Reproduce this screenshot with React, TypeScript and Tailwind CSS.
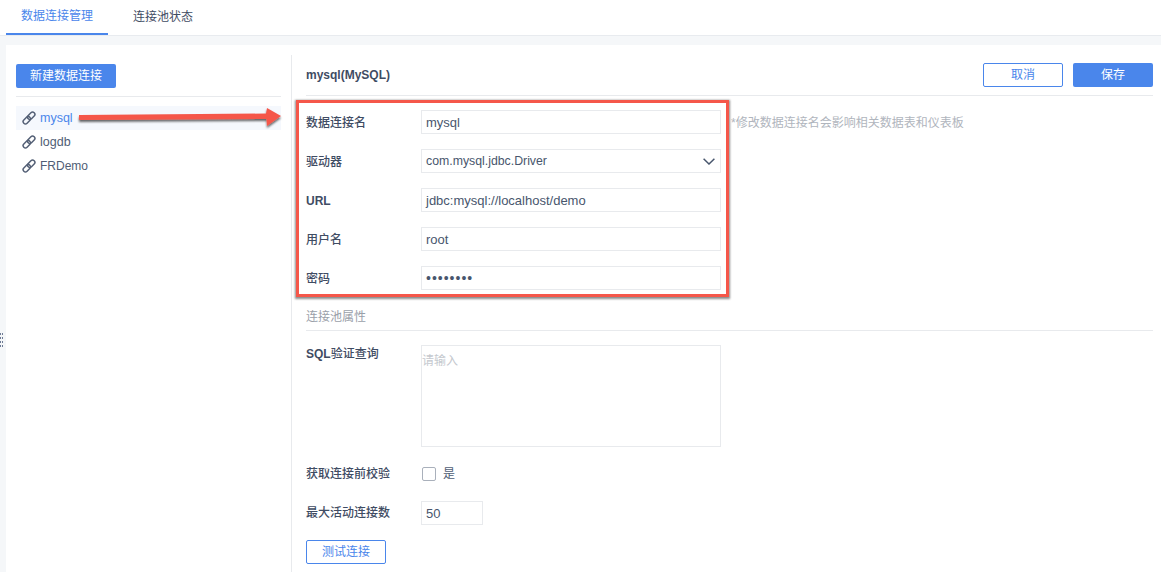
const font = "font-['Liberation_Sans','Noto_Sans_CJK_SC',sans-serif]";

function LinkIcon() {
  return (
    <svg width="14" height="14" viewBox="0 0 14 14" fill="none" stroke="#535f75" strokeWidth="1.5">
      <rect x="6.9" y="0.6" width="4.6" height="8.4" rx="2.3" transform="rotate(45 9.2 4.8)" />
      <rect x="2.5" y="5" width="4.6" height="8.4" rx="2.3" transform="rotate(45 4.8 9.2)" />
    </svg>
  );
}

function Conn({ name, active, size }: { name: string; active?: boolean; size: string }) {
  return (
    <div className={`flex h-6 items-center pl-[6px] ${active ? "bg-[#f5f8fd] text-[#4a86eb]" : "text-[#4f5d75]"}`}>
      <LinkIcon />
      <span className={`ml-[4px] ${size}`}>{name}</span>
    </div>
  );
}

function Row({ label, children, bold }: { label: string; children: React.ReactNode; bold?: boolean }) {
  return (
    <div className="flex h-6 items-center">
      <div className={`w-[115px] pt-[1px] text-[12px] text-[#3f4c63] ${bold ? "font-bold" : "font-medium"}`}>{label}</div>
      {children}
    </div>
  );
}

function Field({ value, className = "w-[300px] text-[13px]" }: { value: string; className?: string }) {
  return (
    <div className={`flex h-6 items-center border border-[#e8eaed] pt-[1px] pl-[4px] text-[#48566d] ${className}`}>
      {value}
    </div>
  );
}

export default function App() {
  return (
    <div className={`relative flex h-[572px] w-[1161px] flex-col overflow-hidden bg-[#f5f7f9] ${font}`}>
      <div className="flex h-9 border-b border-[#e8ebef] bg-white pl-[6px]">
        <div className="flex h-[35px] w-[102px] items-center justify-center border-b-2 border-[#4a86eb] pb-[2px] text-[12px] text-[#4a86eb]">
          数据连接管理
        </div>
        <div className="flex h-[35px] w-[110px] items-center justify-center pb-[2px] text-[12px] text-[#3f4c63]">
          连接池状态
        </div>
      </div>

      <div className="mt-[9px] ml-[6px] flex flex-1 bg-white">
        <div className="mt-[10px] w-[286px] border-r border-[#e8eaed] pr-[10px] pl-[10px]">
          <div className="border-b border-[#e8eaed] pt-2 pb-2">
            <button className="h-6 w-[100px] rounded-[2px] bg-[#4a86eb] text-[12px] text-white">新建数据连接</button>
          </div>
          <div className="mt-[9px]">
            <Conn name="mysql" active size="text-[12.5px]" />
            <Conn name="logdb" size="text-[12.5px]" />
            <Conn name="FRDemo" size="text-[12px]" />
          </div>
        </div>

        <div className="flex-1 pr-2 pl-[14px]">
          <div className="flex h-[51px] items-center justify-between border-b border-[#e8eaed] pt-[11px] pb-[1px]">
            <div className="text-[12px] font-bold text-[#3f4c63]">mysql(MySQL)</div>
            <div className="flex gap-[10px]">
              <button className="h-6 w-20 rounded-[2px] border border-[#4a86eb] text-[12px] text-[#4a86eb]">取消</button>
              <button className="h-6 w-20 rounded-[2px] bg-[#4a86eb] text-[12px] text-white">保存</button>
            </div>
          </div>

          <div className="mt-[14px] flex flex-col gap-[15px]">
            <Row label="数据连接名">
              <Field value="mysql" />
              <span className="ml-[10px] pt-[1px] text-[12px] text-[#b0b5bd]">*修改数据连接名会影响相关数据表和仪表板</span>
            </Row>
            <Row label="驱动器">
              <div className="flex h-6 w-[300px] items-center justify-between border border-[#e8eaed] pt-[1px] pr-[5px] pl-[4px] text-[12.3px] text-[#48566d]">
                com.mysql.jdbc.Driver
                <svg width="12" height="7" viewBox="0 0 12 7" fill="none" stroke="#48566d" strokeWidth="1.5">
                  <polyline points="0.6,0.8 6,6 11.4,0.8" />
                </svg>
              </div>
            </Row>
            <Row label="URL" bold>
              <Field value="jdbc:mysql://localhost/demo" />
            </Row>
            <Row label="用户名">
              <Field value="root" />
            </Row>
            <Row label="密码">
              <Field value="••••••••" className="w-[300px] text-[14px] tracking-[1px]" />
            </Row>
          </div>

          <div className="mt-[18px] flex h-[23px] items-start border-b border-[#e8eaed] text-[12px] text-[#9aa0a9]">连接池属性</div>

          <div className="mt-[14px] flex items-start">
            <div className="w-[115px] text-[12px] font-medium text-[#3f4c63]">
              <span className="font-bold">SQL</span>验证查询
            </div>
            <div className="h-[102px] w-[300px] border border-[#e8eaed] pt-[6px] text-[12px] text-[#c4c8ce]">请输入</div>
          </div>

          <div className="mt-[15px] flex h-6 items-center">
            <div className="w-[116px] text-[12px] font-medium text-[#3f4c63]">获取连接前校验</div>
            <div className="h-[14px] w-[14px] rounded-[2px] border border-[#a9b0bb]" />
            <span className="ml-[7px] text-[12px] text-[#4f5d75]">是</span>
          </div>

          <div className="mt-[15px] flex h-6 items-center">
            <div className="w-[115px] text-[12px] font-medium text-[#3f4c63]">最大活动连接数</div>
            <Field value="50" className="w-[62px] text-[13px]" />
          </div>

          <button className="mt-[15px] h-6 w-20 rounded-[2px] border border-[#4a86eb] text-[12px] text-[#4a86eb]">测试连接</button>
        </div>
      </div>

      {/* drag handle */}
      <div className="absolute top-[333px] left-0 grid grid-cols-2 gap-x-[1px] gap-y-[2px]">
        {Array.from({ length: 8 }).map((_, i) => (
          <div key={i} className="h-[2px] w-[1px] bg-[#6d7a94]" />
        ))}
      </div>

      {/* annotation: red box */}
      <div className="absolute top-[100px] left-[296px] h-[197px] w-[433px] border-[3px] border-[#f5574a] shadow-[0_1px_2px_1px_rgba(0,0,0,0.45)]" />

      {/* annotation: arrow */}
      <svg className="absolute top-[102px] left-[76px]" width="210" height="30" viewBox="0 0 210 30">
        <defs>
          <filter id="arrowShadow" x="-5%" y="-50%" width="110%" height="200%">
            <feDropShadow dx="0" dy="2" stdDeviation="1" floodColor="#000" floodOpacity="0.6" />
          </filter>
        </defs>
        <polygon
          points="3,13 190,11.5 191,6 205,14 191,24 190.5,17 3,18"
          fill="#f5574a"
          filter="url(#arrowShadow)"
        />
      </svg>
    </div>
  );
}
